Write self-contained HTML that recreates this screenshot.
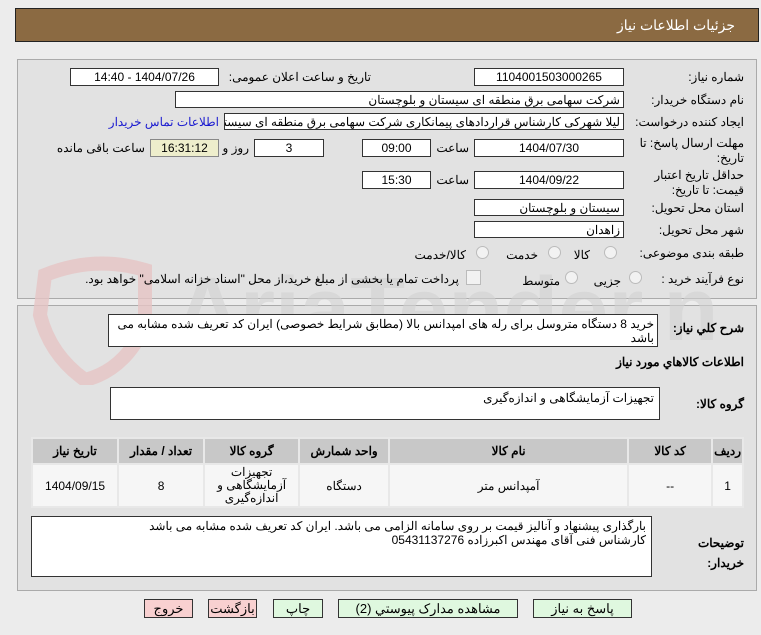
<!DOCTYPE html>
<html><head><meta charset="utf-8"><style>
body{margin:0;width:761px;height:635px;background:#ececec;font-family:"Liberation Sans","Noto Sans CJK SC",sans-serif;font-size:12px;color:#000;position:relative;overflow:hidden}
.a{position:absolute;white-space:nowrap}
.hdr{left:15px;top:8px;width:744px;height:34px;background:#8b6a42;border:1px solid #222;box-sizing:border-box}
.pan{position:absolute;left:17px;width:740px;background:#e2e2e2;border:1px solid #aaa;box-sizing:border-box}
.box{position:absolute;background:#fff;border:1px solid #333;box-sizing:border-box;direction:rtl;text-align:center;line-height:16px;overflow:hidden;white-space:nowrap}
.l{position:absolute;direction:rtl;white-space:nowrap;text-align:right}
.rad{position:absolute;width:13px;height:13px;border-radius:50%;border:1px solid #bbb;background:#f2f2f2;box-sizing:border-box}
table{border-collapse:separate;border-spacing:2px;background:#e8e8e8}
th{background:#c8c8c8;height:22px;font-size:12px;font-weight:bold}
td{background:#f6f6f6;text-align:center;font-size:12px}
.btn{position:absolute;top:599px;height:19px;border:1px solid #333;box-sizing:border-box;text-align:center;line-height:17px;font-size:13px}
</style></head><body>
<div class="a hdr"></div>
<div class="a" style="right:26px;top:17px;color:#fff;font-size:14px">جزئیات اطلاعات نیاز</div>
<div class="pan" style="top:59px;height:240px"></div>
<div class="pan" style="top:305px;height:286px"></div>
<svg class="a" style="left:15px;top:245px" width="700" height="140">
<path d="M30 30 Q80 10 130 25 L130 80 Q110 125 70 135 Q35 110 25 70 Z" fill="none" stroke="#e6c4c4" stroke-width="14" opacity="0.8"/>
<text x="160" y="95" font-family="Liberation Sans" font-size="90" font-weight="bold" fill="#d2d2d2" opacity="0.6">AriaTender.net</text>
</svg>
<div class="l" style="right:17px;top:70px">شماره نیاز:</div>
<div class="box" style="left:474px;top:68px;width:150px;height:18px">1104001503000265</div>
<div class="l" style="right:390px;top:70px">تاریخ و ساعت اعلان عمومی:</div>
<div class="box" style="left:70px;top:68px;width:149px;height:18px">1404/07/26 - 14:40</div>
<div class="l" style="right:17px;top:93px">نام دستگاه خریدار:</div>
<div class="box" style="left:175px;top:91px;width:449px;height:17px;text-align:right;padding-right:3px">شرکت سهامی برق منطقه ای سیستان و بلوچستان</div>
<div class="l" style="right:17px;top:115px">ایجاد کننده درخواست:</div>
<div class="box" style="left:224px;top:113px;width:400px;height:17px;text-align:right;padding-right:3px">لیلا شهرکی کارشناس قراردادهای پیمانکاری شرکت سهامی برق منطقه ای سیستان</div>
<div class="l" style="right:542px;top:115px;color:#1a1ad0">اطلاعات تماس خریدار</div>
<div class="l" style="right:17px;top:136px;line-height:15px">مهلت ارسال پاسخ: تا<br>تاریخ:</div>
<div class="box" style="left:474px;top:139px;width:150px;height:18px">1404/07/30</div>
<div class="l" style="right:292px;top:141px">ساعت</div>
<div class="box" style="left:362px;top:139px;width:69px;height:18px">09:00</div>
<div class="box" style="left:254px;top:139px;width:70px;height:18px">3</div>
<div class="l" style="right:512px;top:141px">روز و</div>
<div class="box" style="left:150px;top:139px;width:69px;height:18px;background:#eeeecc;border-color:#888">16:31:12</div>
<div class="l" style="right:616px;top:141px">ساعت باقی مانده</div>
<div class="l" style="right:17px;top:168px;line-height:15px">حداقل تاریخ اعتبار<br>قیمت: تا تاریخ:</div>
<div class="box" style="left:474px;top:171px;width:150px;height:18px">1404/09/22</div>
<div class="l" style="right:292px;top:173px">ساعت</div>
<div class="box" style="left:362px;top:171px;width:69px;height:18px">15:30</div>
<div class="l" style="right:17px;top:201px">استان محل تحویل:</div>
<div class="box" style="left:474px;top:199px;width:150px;height:17px;text-align:right;padding-right:3px">سیستان و بلوچستان</div>
<div class="l" style="right:17px;top:223px">شهر محل تحویل:</div>
<div class="box" style="left:474px;top:221px;width:150px;height:17px;text-align:right;padding-right:3px">زاهدان</div>
<div class="l" style="right:17px;top:246px">طبقه بندی موضوعی:</div>
<div class="rad" style="left:604px;top:246px"></div><div class="l" style="right:171px;top:248px">کالا</div>
<div class="rad" style="left:548px;top:246px"></div><div class="l" style="right:223px;top:248px">خدمت</div>
<div class="rad" style="left:476px;top:246px"></div><div class="l" style="right:295px;top:248px">کالا/خدمت</div>
<div class="l" style="right:17px;top:272px">نوع فرآیند خرید :</div>
<div class="rad" style="left:629px;top:271px"></div><div class="l" style="right:140px;top:274px">جزیی</div>
<div class="rad" style="left:565px;top:271px"></div><div class="l" style="right:201px;top:274px">متوسط</div>
<div class="a" style="left:466px;top:270px;width:13px;height:13px;border:1px solid #bbb;background:#f2f2f2"></div>
<div class="l" style="right:302px;top:272px">پرداخت تمام یا بخشی از مبلغ خرید،از محل "اسناد خزانه اسلامی" خواهد بود.</div>
<div class="l" style="right:17px;top:321px;font-weight:bold">شرح کلي نياز:</div>
<div class="box" style="left:108px;top:314px;width:550px;height:33px;text-align:right;white-space:normal;padding:2px 3px;line-height:14px;background:#fff">خرید 8 دستگاه متروسل برای رله های امپدانس بالا (مطابق شرایط خصوصی) ایران کد تعریف شده مشابه می باشد</div>
<div class="l" style="right:17px;top:355px;font-weight:bold">اطلاعات کالاهاي مورد نياز</div>
<div class="l" style="right:17px;top:397px;font-weight:bold">گروه کالا:</div>
<div class="box" style="left:110px;top:387px;width:550px;height:33px;text-align:right;padding:2px 5px">تجهیزات آزمایشگاهی و اندازه‌گیری</div>
<table class="a" style="left:31px;top:437px;width:713px;direction:rtl">
<tr><th style="width:26px">ردیف</th><th style="width:80px">کد کالا</th><th style="width:235px">نام کالا</th><th style="width:86px">واحد شمارش</th><th style="width:91px">گروه کالا</th><th style="width:82px">تعداد / مقدار</th><th>تاریخ نیاز</th></tr>
<tr style="height:41px"><td>1</td><td>--</td><td>آمپدانس متر</td><td>دستگاه</td><td style="line-height:13px">تجهیزات<br>آزمایشگاهی و<br>اندازه‌گیری</td><td>8</td><td>1404/09/15</td></tr>
</table>
<div class="l" style="right:17px;top:533px;font-weight:bold;line-height:20px">توضیحات<br>خریدار:</div>
<div class="box" style="left:31px;top:516px;width:621px;height:61px;text-align:right;padding:2px 5px;line-height:14px;white-space:normal">بارگذاری پیشنهاد و آنالیز قیمت بر روی سامانه الزامی می باشد. ایران کد تعریف شده مشابه می باشد<br>کارشناس فنی آقای مهندس اکبرزاده 05431137276</div>
<div class="btn" style="left:144px;width:49px;background:#f8d0d0">خروج</div>
<div class="btn" style="left:208px;width:49px;background:#f8d0d0">بازگشت</div>
<div class="btn" style="left:273px;width:50px;background:#dff8df">چاپ</div>
<div class="btn" style="left:338px;width:180px;background:#dff8df">مشاهده مدارک پیوستي (2)</div>
<div class="btn" style="left:533px;width:99px;background:#dff8df">پاسخ به نیاز</div>
</body></html>
